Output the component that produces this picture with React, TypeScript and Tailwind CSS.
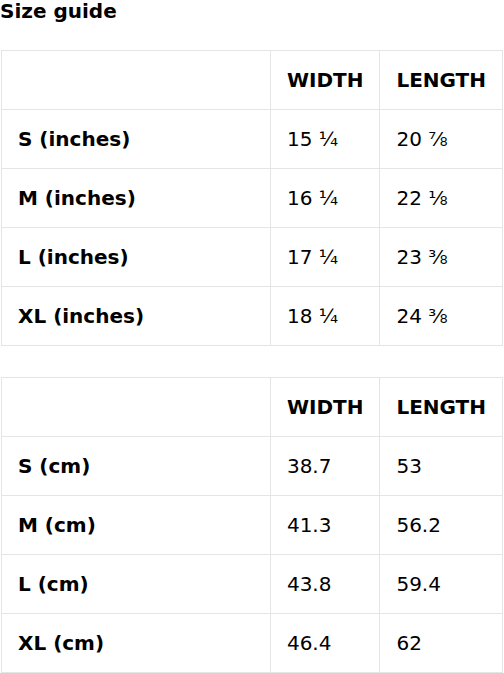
import React from "react";

const inches = [
  ["S (inches)", "15 ¼", "20 ⅞"],
  ["M (inches)", "16 ¼", "22 ⅛"],
  ["L (inches)", "17 ¼", "23 ⅜"],
  ["XL (inches)", "18 ¼", "24 ⅜"],
];

const cm = [
  ["S (cm)", "38.7", "53"],
  ["M (cm)", "41.3", "56.2"],
  ["L (cm)", "43.8", "59.4"],
  ["XL (cm)", "46.4", "62"],
];

const SizeTable = ({ rows }: { rows: string[][] }) => (
  <table className="w-[502px] border-collapse text-[20px] text-black">
    <thead>
      <tr>
        <th className="w-[271px] h-[59px] border border-[#e5e5e5] px-4 text-left"></th>
        <th className="w-[109px] h-[59px] border border-[#e5e5e5] px-4 text-left font-bold">
          WIDTH
        </th>
        <th className="h-[59px] border border-[#e5e5e5] px-4 text-left font-bold">
          LENGTH
        </th>
      </tr>
    </thead>
    <tbody>
      {rows.map(([label, w, l]) => (
        <tr key={label}>
          <td className="h-[59px] border border-[#e5e5e5] px-4 font-bold">{label}</td>
          <td className="h-[59px] border border-[#e5e5e5] px-4">{w}</td>
          <td className="h-[59px] border border-[#e5e5e5] px-4">{l}</td>
        </tr>
      ))}
    </tbody>
  </table>
);

export default function App() {
  return (
    <div
      className="bg-white w-[504px] pl-px"
      style={{ fontFamily: '"DejaVu Sans", sans-serif' }}
    >
      <h1 className="-ml-px text-[20px] font-bold leading-[23px] text-black">Size guide</h1>
      <div className="mt-[27px] flex flex-col gap-[31px]">
        <SizeTable rows={inches} />
        <SizeTable rows={cm} />
      </div>
    </div>
  );
}
